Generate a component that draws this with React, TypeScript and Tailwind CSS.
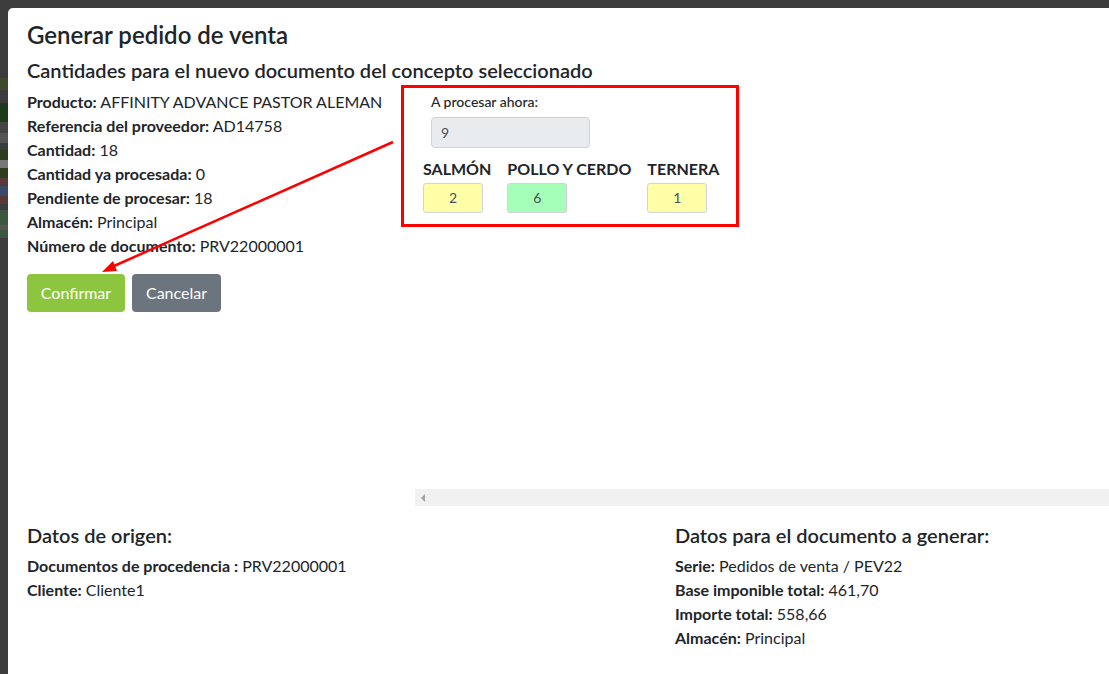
import React from 'react'

const infoRows = [
  { label: 'Producto:', value: 'AFFINITY ADVANCE PASTOR ALEMAN' },
  { label: 'Referencia del proveedor:', value: 'AD14758' },
  { label: 'Cantidad:', value: '18' },
  { label: 'Cantidad ya procesada:', value: '0' },
  { label: 'Pendiente de procesar:', value: '18' },
  { label: 'Almacén:', value: 'Principal' },
  { label: 'Número de documento:', value: 'PRV22000001' },
]

const variants = [
  { name: 'SALMÓN', qty: '2', color: 'bg-[#ffffa8]' },
  { name: 'POLLO Y CERDO', qty: '6', color: 'bg-[#a6ffb9]' },
  { name: 'TERNERA', qty: '1', color: 'bg-[#ffffa8]' },
]

const originRows = [
  { label: 'Documentos de procedencia :', value: 'PRV22000001' },
  { label: 'Cliente:', value: 'Cliente1' },
]

const targetRows = [
  { label: 'Serie:', value: 'Pedidos de venta / PEV22' },
  { label: 'Base imponible total:', value: '461,70' },
  { label: 'Importe total:', value: '558,66' },
  { label: 'Almacén:', value: 'Principal' },
]

function Line({ label, value }: { label: string; value: string }) {
  return (
    <p className="text-[16px] leading-[24px] text-[#212529]">
      <span className="font-bold">{label}</span> {value}
    </p>
  )
}

// darkened page behind the modal
function Backdrop() {
  return (
    <div className="w-[8px] shrink-0 flex flex-col">
      <div className="h-[78px]" />
      <div className="h-[12px] bg-[#3f4a2c]" />
      <div className="h-[13px]" />
      <div className="h-[19px] bg-[#1d3b1a]" />
      <div className="h-[11px] bg-[#444]" />
      <div className="h-[10px] bg-[#555]" />
      <div className="h-[7px]" />
      <div className="h-[10px] bg-[#2f3b1f]" />
      <div className="h-[8px] bg-[#777]" />
      <div className="h-[10px] bg-[#2f3b1f]" />
      <div className="h-[8px] bg-[#5a3838]" />
      <div className="h-[10px] bg-[#3a4a6a]" />
      <div className="h-[8px] bg-[#5a3838]" />
      <div className="h-[6px]" />
      <div className="h-[15px] bg-[#3d5640]" />
      <div className="h-[5px] bg-[#555]" />
      <div className="h-[8px] bg-[#3d5640]" />
    </div>
  )
}

export default function App() {
  return (
    <div className="relative h-screen overflow-hidden bg-[#3c3c3c] flex font-['Lato','Noto_Sans',sans-serif]">
      <Backdrop />
      <div className="flex-1 pt-[8px] min-w-0">
        <div className="h-full bg-white rounded-tl-[5px] pl-[19px] pt-[12px]">
          <h1 className="text-[24px] leading-[29px] font-semibold text-[#212529]">Generar pedido de venta</h1>
          <h2 className="mt-[9px] text-[20px] leading-[24px] font-semibold text-[#212529]">
            Cantidades para el nuevo documento del concepto seleccionado
          </h2>

          <div className="mt-[3px] flex">
            <div className="w-[374px] shrink-0 pt-[5px]">
              {infoRows.map((r) => (
                <Line key={r.label} {...r} />
              ))}
              <div className="mt-[16px] flex gap-[7px]">
                <button className="h-[38px] w-[98px] rounded-[4px] bg-[#8cc63f] text-[16px] text-white">Confirmar</button>
                <button className="h-[38px] w-[89px] rounded-[4px] bg-[#6c757d] text-[16px] text-white">Cancelar</button>
              </div>
            </div>

            <div className="flex-1 flex flex-col">
              <div className="w-[338px] border-[3px] border-[#ff0000] pl-[19px] pt-[5px] pb-[11px]">
                <div className="pl-[8px]">
                  <p className="text-[14px] leading-[18px] font-medium text-[#212529]">A procesar ahora:</p>
                  <div className="mt-[6px] h-[31px] w-[159px] rounded-[4px] border border-[#ced4da] bg-[#e9ecef] pl-[9px] text-[14px] leading-[29px] text-[#495057]">
                    9
                  </div>
                </div>
                <div className="mt-[12px] flex gap-[16px]">
                  {variants.map((v) => (
                    <div key={v.name} className="flex flex-col">
                      <span className="text-[16px] leading-[18px] font-bold text-[#212529]">{v.name}</span>
                      <div
                        className={`mt-[5px] h-[30px] w-[60px] rounded-[3px] border border-[#ced4da] ${v.color} text-center text-[14px] leading-[28px] text-[#495057]`}
                      >
                        {v.qty}
                      </div>
                    </div>
                  ))}
                </div>
              </div>
              <div className="mt-[262px] ml-[14px] h-[17px] bg-[#f1f1f1] flex items-center pl-[6px]">
                <svg width="5" height="8" viewBox="0 0 5 8">
                  <polygon points="4,0 4,8 0,4" fill="#a3a3a3" />
                </svg>
              </div>
            </div>
          </div>

          <div className="mt-[17px] flex">
            <div className="w-[648px] shrink-0">
              <h3 className="text-[20px] leading-[24px] font-semibold text-[#212529]">Datos de origen:</h3>
              <div className="mt-[7px]">
                {originRows.map((r) => (
                  <Line key={r.label} {...r} />
                ))}
              </div>
            </div>
            <div className="flex-1">
              <h3 className="text-[20px] leading-[24px] font-semibold text-[#212529]">Datos para el documento a generar:</h3>
              <div className="mt-[7px]">
                {targetRows.map((r) => (
                  <Line key={r.label} {...r} />
                ))}
              </div>
            </div>
          </div>
        </div>
      </div>

      {/* annotation arrow */}
      <svg className="pointer-events-none absolute left-0 top-0" width="1109" height="674">
        <line x1="393" y1="142" x2="114" y2="266" stroke="#ff0000" strokeWidth="2.5" />
        <polygon points="102,272 117,271 113,261" fill="#ff0000" />
      </svg>
    </div>
  )
}
